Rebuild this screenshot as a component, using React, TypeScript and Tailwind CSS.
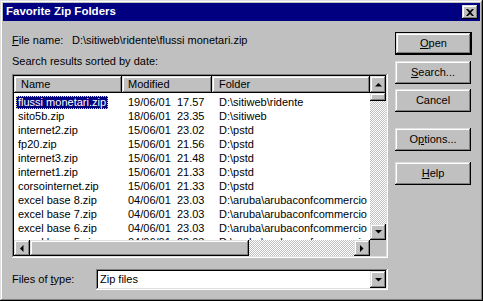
import React from "react";

const raised =
  "bg-[#c0c0c0] shadow-[inset_-1px_-1px_#000,inset_1px_1px_#dfdfdf,inset_-2px_-2px_#808080,inset_2px_2px_#fff]";
const sunken =
  "shadow-[inset_-1px_-1px_#fff,inset_1px_1px_#808080,inset_-2px_-2px_#dfdfdf,inset_2px_2px_#000]";
const dither =
  "bg-[repeating-conic-gradient(#fff_0%_25%,#c0c0c0_0%_50%)] bg-[length:2px_2px]";

const rows = [
  ["flussi monetari.zip", "19/06/01  17.57", "D:\\sitiweb\\ridente"],
  ["sito5b.zip", "18/06/01  23.35", "D:\\sitiweb"],
  ["internet2.zip", "15/06/01  23.02", "D:\\pstd"],
  ["fp20.zip", "15/06/01  21.56", "D:\\pstd"],
  ["internet3.zip", "15/06/01  21.48", "D:\\pstd"],
  ["internet1.zip", "15/06/01  21.33", "D:\\pstd"],
  ["corsointernet.zip", "15/06/01  21.33", "D:\\pstd"],
  ["excel base 8.zip", "04/06/01  23.03", "D:\\aruba\\arubaconfcommercio"],
  ["excel base 7.zip", "04/06/01  23.03", "D:\\aruba\\arubaconfcommercio"],
  ["excel base 6.zip", "04/06/01  23.03", "D:\\aruba\\arubaconfcommercio"],
  ["excel base 5.zip", "04/06/01  23.03", "D:\\aruba\\arubaconfcommercio"],
  ["excel base 4.zip", "04/06/01  23.03", "D:\\aruba\\arubaconfcommercio"],
];

// little black triangle used by scroll & combo buttons
function Arrow({ dir }: { dir: "up" | "down" | "left" | "right" }) {
  const pts = {
    up: "3.5,0 0,3.5 7,3.5",
    down: "0,0 7,0 3.5,3.5",
    left: "3.5,0 3.5,7 0,3.5",
    right: "0,0 0,7 3.5,3.5",
  }[dir];
  const vert = dir === "up" || dir === "down";
  return (
    <svg width={vert ? 7 : 4} height={vert ? 4 : 7} viewBox={vert ? "0 0 7 4" : "0 0 4 7"}>
      <polygon points={pts} fill="#000" />
    </svg>
  );
}

function Btn({ children, isDefault }: { children: React.ReactNode; isDefault?: boolean }) {
  if (isDefault) {
    return (
      <div className="h-[23px] w-[77px] border border-black">
        <div className={`${raised} flex h-full w-full items-center justify-center`}>{children}</div>
      </div>
    );
  }
  return (
    <div className={`${raised} flex h-[23px] w-[76px] items-center justify-center`}>{children}</div>
  );
}

export default function App() {
  return (
    <div className="flex h-[301px] w-[483px] flex-col bg-[#c0c0c0] p-[3px] font-['Liberation_Sans',Arial,sans-serif] text-[11px] leading-none text-black shadow-[inset_-1px_-1px_#000,inset_1px_1px_#dfdfdf,inset_-2px_-2px_#808080,inset_2px_2px_#fff]">
      {/* title bar */}
      <div className="flex h-[18px] items-center justify-between bg-[#000080] pl-[3px] pr-[2px]">
        <span className="text-[11.5px] font-bold text-white">Favorite Zip Folders</span>
        <div className={`${raised} flex h-[14px] w-[16px] items-center justify-center`}>
          <svg width="8" height="7" viewBox="0 0 8 7">
            <path d="M0 0h2l2 2 2-2h2L5 3.5 8 7H6L4 5 2 7H0l3-3.5z" fill="#000" />
          </svg>
        </div>
      </div>

      <div className="flex flex-1 pl-[9px]">
        {/* left side */}
        <div className="flex w-[376px] flex-col pt-[12px]">
          <div className="flex h-[14px] items-center">
            <span className="w-[60px]">
              <span className="underline">F</span>ile name:
            </span>
            <span>D:\sitiweb\ridente\flussi monetari.zip</span>
          </div>
          <div className="mt-[7px] flex h-[14px] items-center">Search results sorted by date:</div>

          {/* list view */}
          <div className={`mt-[6px] h-[184px] bg-white p-[2px] ${sunken}`}>
            <div className="flex h-[164px]">
              <div className="w-[356px] overflow-hidden">
                <div className="flex h-[17px]">
                  <div className={`${raised} flex w-[108px] items-center pl-[7px]`}>Name</div>
                  <div className={`${raised} flex w-[90px] items-center pl-[6px]`}>Modified</div>
                  <div className={`${raised} flex flex-1 items-center pl-[7px]`}>Folder</div>
                </div>
                <div className="pt-[2px]">
                  {rows.map((r, i) => (
                    <div key={i} className="flex h-[14px] items-center whitespace-pre">
                      <div className="w-[108px] pl-[2px]">
                        {i === 0 ? (
                          <span className="inline-flex h-[13px] items-center border border-dotted border-[#e0e080] bg-[#000080] px-[1px] text-white">
                            {r[0]}
                          </span>
                        ) : (
                          <span className="pl-[2px]">{r[0]}</span>
                        )}
                      </div>
                      <div className="w-[90px] pl-[6px]">{r[1]}</div>
                      <div className="flex-1 pl-[7px]">{r[2]}</div>
                    </div>
                  ))}
                </div>
              </div>
              {/* vertical scrollbar */}
              <div className="flex w-[16px] flex-col">
                <div className={`${raised} flex h-[17px] items-center justify-center`}>
                  <Arrow dir="up" />
                </div>
                <div className={`${raised} h-[8px]`} />
                <div className={`flex-1 ${dither}`} />
                <div className={`${raised} flex h-[16px] items-center justify-center`}>
                  <Arrow dir="down" />
                </div>
              </div>
            </div>
            {/* horizontal scrollbar */}
            <div className="flex h-[16px]">
              <div className={`${raised} flex w-[16px] items-center justify-center`}>
                <Arrow dir="left" />
              </div>
              <div className={`${raised} w-[219px]`} />
              <div className={`flex-1 ${dither}`} />
              <div className={`${raised} flex w-[16px] items-center justify-center`}>
                <Arrow dir="right" />
              </div>
              <div className="w-[16px] bg-[#c0c0c0]" />
            </div>
          </div>

          <div className="mt-[11px] flex h-[21px] items-center">
            <span className="w-[84px]">
              Files of <span className="underline">t</span>ype:
            </span>
            <div className={`flex h-[21px] flex-1 items-center bg-white p-[2px] ${sunken}`}>
              <span className="flex-1 pl-[2px]">Zip files</span>
              <div className={`${raised} flex h-[17px] w-[16px] items-center justify-center`}>
                <Arrow dir="down" />
              </div>
            </div>
          </div>
        </div>

        {/* buttons */}
        <div className="ml-[7px] flex flex-col pt-[11px]">
          <Btn isDefault>
            <span>
              <span className="underline">O</span>pen
            </span>
          </Btn>
          <div className="mt-[6px]">
            <Btn>
              <span>
                <span className="underline">S</span>earch...
              </span>
            </Btn>
          </div>
          <div className="mt-[5px]">
            <Btn>Cancel</Btn>
          </div>
          <div className="mt-[16px]">
            <Btn>
              <span>
                O<span className="underline">p</span>tions...
              </span>
            </Btn>
          </div>
          <div className="mt-[11px]">
            <Btn>
              <span>
                <span className="underline">H</span>elp
              </span>
            </Btn>
          </div>
        </div>
      </div>
    </div>
  );
}
